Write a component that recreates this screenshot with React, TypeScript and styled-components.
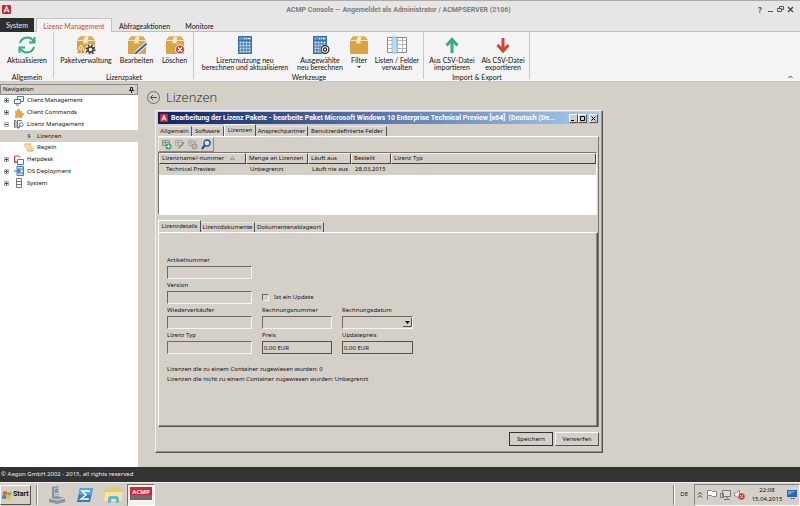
import React from "react";
import styled, { createGlobalStyle, css } from "styled-components";

const face = "#d4d0c8";
const ui = '"Noto Sans", "DejaVu Sans", sans-serif';
const ribbonFont = 'Lato, "Noto Sans", sans-serif';
const captionFont = 'Roboto, "Noto Sans", sans-serif';

const Global = createGlobalStyle`
  *, *::before, *::after { box-sizing: border-box; }
  body { margin: 0; background: ${face}; }
  button, input, select { font: inherit; color: inherit; margin: 0; padding: 0; border: 0; border-radius: 0; background: none; }
  button { white-space: nowrap; }
  ul { list-style: none; margin: 0; padding: 0; }
  h1, h2, p { margin: 0; font-weight: normal; }
  svg { display: block; flex: none; }
`;

const raised = css`
  border: 1px solid;
  border-color: #fff #55534f #55534f #fff;
`;

const Page = styled.div`
  min-height: 100vh;
  display: flex;
  flex-direction: column;
  font: 6px/9px ${ui};
  color: #111;
  background: ${face};
`;

/* Application title and ribbon */

const TitleBar = styled.header`
  display: grid;
  grid-template-columns: 1fr auto 1fr;
  align-items: center;
  height: 18px;
  padding: 0 5px 0 2px;
  border-top: 1px solid #aaa;
  background: #e6e6e6;
`;

const AppTitle = styled.h1`
  font: bold 7px/10px ${captionFont};
  color: #7c7c7c;
`;

const WindowControls = styled.div`
  display: flex;
  justify-content: flex-end;
  color: #555;
  button { width: 10px; height: 10px; display: grid; place-items: center; font-weight: bold; font-size: 8px; }
`;

const RibbonTabs = styled.div`
  display: flex;
  height: 14px;
  font: 7px/9px ${ribbonFont};
  background: #e6e6e6;
  border-bottom: 1px solid #bdbdbd;
`;

const RibbonTab = styled.button<{ $kind?: "system" | "active"; $width: number }>`
  width: ${(p) => p.$width}px;
  height: 14px;
  padding-top: 2px;
  text-align: center;
  ${(p) => p.$kind === "system" && css`background: #2d2d2d; color: #eee; margin-right: 2px; padding-top: 0;`}
  ${(p) => p.$kind === "active" && css`background: #f4f4f4; color: #d2452f; border: 1px solid #c4c4c4; border-bottom: 0;`}
`;

const Ribbon = styled.div`
  display: flex;
  height: 50px;
  font: 7px/7px ${ribbonFont};
  background: #f4f4f4;
  border-bottom: 1px solid #c9c7c3;
`;

const Group = styled.section<{ $width: number }>`
  width: ${(p) => p.$width}px;
  display: flex;
  flex-direction: column;
  justify-content: space-between;
  padding-top: 3px;
  background: linear-gradient(#c8c8c8, #c8c8c8) right top / 1px 47px no-repeat;
`;

const GroupItems = styled.div`
  display: flex;
  justify-content: center;
`;

const GroupTitle = styled.h2`
  font-size: 7px;
  line-height: 7px;
  text-align: center;
`;

const Tool = styled.button<{ $width: number }>`
  width: ${(p) => p.$width}px;
  display: flex;
  flex-direction: column;
  align-items: center;
  gap: 2px;
  line-height: 7px;
  white-space: pre;
`;

const Collapse = styled.button`
  margin: auto 6px 2px auto;
`;

/* Workspace */

const Workspace = styled.main`
  flex: 1;
  display: flex;
  padding-top: 2px;
`;

const Navigation = styled.nav`
  width: 138px;
  flex: none;
  display: flex;
  flex-direction: column;
  background: #fff;
`;

const NavHeader = styled.div`
  display: flex;
  align-items: center;
  justify-content: space-between;
  height: 11px;
  padding: 0 3px 0 2px;
  border: 1px solid #8b8983;
  background: ${face};
`;

const Tree = styled.ul`
  display: grid;
  grid-template-rows: repeat(8, 1fr);
  height: 94px;
`;

const TreeItem = styled.li<{ $child?: boolean; $selected?: boolean }>`
  display: flex;
  align-items: center;
  gap: 3px;
  padding-left: ${(p) => (p.$child ? 24 : 4)}px;
  background: ${(p) => (p.$selected ? face : "transparent")};
`;

const Expander = styled.button`
  width: 5px;
  height: 5px;
  margin-right: 2px;
`;

const TreeLabel = styled.a`
  color: inherit;
  text-decoration: none;
`;

const Content = styled.div`
  flex: 1;
  min-width: 0;
  padding: 3px 197px 13px 17px;
`;

const PageHead = styled.div`
  display: flex;
  align-items: center;
  gap: 6px;
  height: 20px;
  margin: 0 0 3px -8px;
  h2 { font: 300 13px/18px "Open Sans", "Noto Sans", sans-serif; color: #222; }
`;

const BackButton = styled.button`
  width: 13px;
  height: 13px;
`;

/* Licence dialog */

const Dialog = styled.section`
  border: 1px solid;
  border-color: #f4f2ee #55534f #55534f #f4f2ee;
  box-shadow: inset -1px -1px #95928b;
  padding: 1px 3px 6px 2px;
`;

const DialogTitle = styled.div`
  display: flex;
  align-items: center;
  gap: 3px;
  height: 12px;
  padding: 0 1px 0 2px;
  font-weight: bold;
  color: #fff;
  background: linear-gradient(90deg, #0c246a, #a6caf0);
`;

const DialogCaption = styled.h2`
  flex: 1;
  min-width: 0;
  overflow: hidden;
  text-overflow: ellipsis;
  white-space: pre;
  font: bold 7px/10px ${captionFont};
`;

const CaptionButtons = styled.div`
  display: flex;
  button { ${raised} width: 9px; height: 9px; background: ${face}; }
  button:last-child { margin-left: 2px; }
`;

const TabStrip = styled.div<{ $spaced?: boolean }>`
  display: flex;
  align-items: flex-end;
  height: 12px;
  margin-top: ${(p) => (p.$spaced ? 5 : 0)}px;
`;

const Tab = styled.button<{ $active?: boolean; $width: number }>`
  width: ${(p) => p.$width}px;
  height: 10px;
  text-align: center;
  border-top: 1px solid #e9e7e2;
  border-right: 1px solid #55534f;
  ${(p) => p.$active && css`height: 12px; padding-bottom: 1px; background: ${face}; border-left: 1px solid #fff; border-top-color: #fff;`}
`;

const Panel = styled.div`
  border: 1px solid;
  border-color: #fff #55534f #55534f #fff;
  box-shadow: inset -1px -1px #8b8983;
`;

const OuterPanel = styled.div`
  border-top: 1px solid #fff;
  border-right: 1px solid #77746e;
`;

const IconBar = styled.div`
  display: flex;
  align-items: center;
  gap: 3px;
  width: 56px;
  height: 15px;
  padding-left: 3px;
  border: 1px solid;
  border-color: #eceae6 #8b8983 #8b8983 #eceae6;
`;

const GridBox = styled.div`
  height: 63px;
  background: #fff;
  border: 1px solid;
  border-color: #77746e #fff #fff #77746e;
  margin-right: 1px;
`;

const Licences = styled.table`
  width: 100%;
  table-layout: fixed;
  border-collapse: separate;
  border-spacing: 0;
  th, td { height: 11px; padding: 0 0 0 4px; text-align: left; font-weight: normal; white-space: nowrap; background: ${face}; }
  th { border: 1px solid; border-color: #f0eee9 #44423e #44423e #f0eee9; padding-left: 2px; }
  td:first-child { padding-left: 7px; }
`;

const SortMark = styled.svg`
  display: inline-block;
  margin-left: 6px;
`;

const Details = styled(Panel)`
  padding: 23px 7px 42px 8px;
`;

const Form = styled.div`
  display: grid;
  grid-template-columns: 85px 70px 71px;
  column-gap: 10px;
  row-gap: 2px;
`;

const Field = styled.label<{ $newRow?: boolean }>`
  display: flex;
  flex-direction: column;
  gap: 1px;
  ${(p) => p.$newRow && css`grid-column-start: 1;`}
`;

const boxed = css`
  height: 13px;
  width: 100%;
  background: ${face};
  border: 1px solid;
  border-color: #6b6964 #f5f3ef #f5f3ef #6b6964;
`;

const TextBox = styled.input<{ $framed?: boolean }>`
  ${boxed}
  padding-left: 1px;
  ${(p) => p.$framed && css`border-color: #55534f;`}
`;

const DateBox = styled.div`
  display: grid;
  > * { grid-area: 1 / 1; }
  > svg { justify-self: end; margin: 2px 1px 0 0; pointer-events: none; }
`;

const DateSelect = styled.select`
  ${boxed}
  appearance: none;
`;

const CheckLabel = styled.label`
  display: flex;
  align-items: center;
  gap: 5px;
  height: 13px;
  align-self: end;
  white-space: nowrap;
`;

const CheckBox = styled.input`
  appearance: none;
  width: 7px;
  height: 7px;
  border: 1px solid;
  border-color: #6b6964 #f5f3ef #f5f3ef #6b6964;
`;

const Notes = styled.div`
  margin-top: 10px;
  line-height: 10px;
  white-space: nowrap;
`;

const Actions = styled.div`
  display: flex;
  justify-content: flex-end;
  gap: 2px;
  margin-top: 5px;
`;

const ActionButton = styled.button<{ $primary?: boolean }>`
  ${raised}
  width: 44px;
  height: 14px;
  ${(p) => p.$primary && css`outline: 1px solid #333; outline-offset: -1px;`}
`;

/* Status line and taskbar */

const StatusLine = styled.footer`
  height: 15px;
  padding: 3px 1px;
  color: #eee;
  background: #333;
`;

const Taskbar = styled.div`
  display: flex;
  align-items: center;
  height: 24px;
  border-top: 1px solid #f2f0ec;
`;

const StartButton = styled.button`
  ${raised}
  display: flex;
  align-items: center;
  gap: 1px;
  width: 31px;
  height: 20px;
  font: bold 7px/9px ${captionFont};
  padding-left: 1px;
  margin-right: 5px;
`;

const Divider = styled.span`
  width: 1px;
  height: 20px;
  background: #8b8983;
  box-shadow: 1px 0 #fff;
`;

const TaskButton = styled.button<{ $active?: boolean }>`
  width: 28px;
  height: 22px;
  display: grid;
  place-items: center;
  ${(p) => p.$active && css`background: #f3f1ee; border: 1px solid; border-color: #77746e #fff #fff #77746e;`}
`;

const Launchers = styled.div`
  display: flex;
  margin: 0 auto 0 6px;
`;

const Language = styled.span`
  margin: 0 6px;
`;

const Tray = styled.div`
  display: flex;
  align-items: center;
  gap: 3px;
  height: 22px;
  padding: 0 2px;
  border: 1px solid;
  border-color: #8b8983 #fff #fff #8b8983;
`;

const Clock = styled.time`
  width: 34px;
  margin-left: 2px;
  text-align: center;
  line-height: 9px;
`;

const AppLogo = ({ size = 9 }: { size?: number }) => (
  <svg width={size} height={size} viewBox="0 0 9 9">
    <rect width="9" height="9" rx="1" fill="#dc1f2c" />
    <path d="M2 7.3 4.5 1.7 7 7.3M3.2 5.6h2.6" fill="none" stroke="#fff" strokeWidth="1.2" />
  </svg>
);

const Refresh = () => (
  <svg width="20" height="20" viewBox="0 0 20 20" fill="none" stroke="#35ac7c" strokeWidth="2">
    <path d="M3 8A7.300 7.300 0 0 1 16.500 6.500M17 12A7.300 7.300 0 0 1 3.500 13.500" />
    <path d="M17.500 2v5.500H12M2.500 18v-5.500H8" />
  </svg>
);

const BoxIcon = ({ mark }: { mark?: "gear" | "pen" | "delete" }) => (
  <svg width="20" height="20" viewBox="0 0 20 20">
    <path d="M1 5.500 4 1.500h12l3 4V19H1z" fill="#d9a441" />
    <path d="M4 1.500h12l3 4H1z" fill="#e0ae50" />
    <path d="m9 1.500-1.500 4v3.500l2-1 2 1V5.500l1-4z" fill="#f8ecd0" />
    <path d="M1 5.500h6.500M11.500 5.500H19" stroke="#fbf3df" strokeWidth=".8" />
    {mark === "gear" && (
      <g>
        <path d="m5 10 4.500 8.500h-9z" fill="#e88a25" stroke="#f4f4f4" />
        <path d="M5 13v3M5 16.700v1" stroke="#fff" />
        <circle cx="14.500" cy="14.500" r="5.400" fill="#f4f4f4" />
        <circle cx="14.500" cy="14.500" r="4.300" fill="none" stroke="#444" strokeWidth="1.500" strokeDasharray="1.700 1.680" />
        <circle cx="14.500" cy="14.500" r="2.700" fill="none" stroke="#444" strokeWidth="1.800" />
      </g>
    )}
    {mark === "pen" && (
      <g><path d="M8.500 18.500 20 8" stroke="#f4f4f4" strokeWidth="4" /><path d="m9.500 17.500 10-9" stroke="#2c6cb5" strokeWidth="2.200" /><path d="m8 19 .7-2.500 1.800 1.800z" fill="#333" /></g>
    )}
    {mark === "delete" && (
      <g><circle cx="15" cy="14.500" r="4.600" fill="#cf4437" stroke="#f4f4f4" /><path d="m13 12.500 4 4m0-4-4 4" stroke="#fff" strokeWidth="1.300" /></g>
    )}
  </svg>
);

const Calculator = ({ gear }: { gear?: boolean }) => (
  <svg width="20" height="20" viewBox="0 0 20 20">
    <path d="M3 1h14v18H3z" fill="#396fa9" />
    <path d="M4 2h12v3H4z" fill="#5b95cd" />
    <path d="M9 3.500h1m1 0h1m1 0h2" stroke="#fff" />
    <path d="M4.500 7.500h11M4.500 10.500h11M4.500 13.500h11M4.500 16.500h11" stroke="#d7e8f7" strokeWidth="2" strokeDasharray="2 1" />
    {gear && (
      <g><circle cx="15" cy="14.500" r="4.800" fill="#fff" /><circle cx="15" cy="14.500" r="3.900" fill="none" stroke="#222" strokeWidth="1.200" /><circle cx="15" cy="14.500" r="1.700" fill="none" stroke="#222" strokeWidth="1.200" /></g>
    )}
  </svg>
);

const ColumnsIcon = () => (
  <svg width="20" height="20" viewBox="0 0 20 20">
    <path d="M.5 2.500h19v15H.5z" fill="#fff" stroke="#888" />
    <path d="M1 5.500h18M1 9.500h18M1 13.500h18M10.500 3v14M15.500 3v14" stroke="#aaa" strokeWidth=".8" />
    <path d="M5 2h5v16H5z" fill="#b9dff0" stroke="#72aeca" strokeWidth=".7" />
  </svg>
);

const Arrow = ({ down }: { down?: boolean }) => (
  <svg width="20" height="20" viewBox="0 0 20 20" fill="none" stroke={down ? "#cf4437" : "#38ac80"} strokeWidth="3">
    <path d={down ? "M10 3v14M4.500 10l5.500 6 5.500-6" : "M10 18V4M4.500 10.500 10 4.500l5.500 6"} />
  </svg>
);

type NavKind = "client" | "command" | "license" | "rules" | "help" | "deploy" | "system";
const NavIcon = ({ kind }: { kind: NavKind }) => (
  <svg width="10" height="10" viewBox="0 0 10 10" fill="none" stroke="#3d7fbd">
    {kind === "client" && <g><path d="M3.500.5h6v5h-6z" /><path d="M.5 3.500h6v4h-6z" fill="#fff" /><path d="M2 9h3" /></g>}
    {kind === "command" && <path d="M1 3h2.200a1.500 1.500 0 1 1 2.600 0H8v2.200a1.400 1.400 0 1 1 0 2.400V10H5.500a1.400 1.400 0 0 0-2.300 0H1V7.500a1.300 1.300 0 0 0 0-2.300z" fill="#eea53c" stroke="none" />}
    {kind === "license" && <g><path d="M.5 9V1.500h1.500V9M3.500 9V1.500H8" stroke="#777" /><circle cx="7.200" cy="5.500" r="1.900" fill="#fff" /><path d="M5.800 7 4 9.500" strokeWidth="1.300" /></g>}
    {kind === "rules" && <path d="M1 1h6c-3 2.500 3 2.500 2 7H3c2-2.500-3-3-2-7zM2.500 3h3M4 5h3M5 7h3" stroke="#eb9d3a" />}
    {kind === "help" && <g><path d="M.5 1v6h3" stroke="#cc4437" strokeWidth="1.500" /><path d="M1 1h4l1 1.500" stroke="#cc4437" /><path d="M3.500 4.500h6v5h-6z" fill="#fff" /></g>}
    {kind === "deploy" && <g><path d="M3 .5h6.500v9H3z" fill="#cfe4f5" /><path d="M4 3h5M4 7h5M0 5h6M4 3.500 6 5 4 6.500" strokeWidth="1.200" /></g>}
    {kind === "system" && <path d="M2.500.5h5v9h-5zM2.500 3.500h5M2.500 6.500h5" stroke="#777" />}
  </svg>
);

const ExpandMark = ({ open }: { open?: boolean }) => (
  <svg width="5" height="5" viewBox="0 0 5 5" fill="none" stroke="#666">
    <path d="M.5.5h4v4h-4z" stroke="#aaa" /><path d={open ? "M1 2.500h3" : "M1 2.500h3M2.500 1v3"} stroke="#444" />
  </svg>
);

type BarKind = "add" | "edit" | "remove" | "search";
const BarIcon = ({ kind }: { kind: BarKind }) => (
  <svg width="10" height="11" viewBox="0 0 10 11" fill="none">
    {kind !== "search" && <path d="M.5 1.500h7v5h-7zM.5 3.500h7M3 1.500v5" stroke={kind === "add" ? "#6c8c7c" : "#a3a19c"} strokeWidth=".8" />}
    {kind === "add" && <g><circle cx="6.500" cy="7.500" r="3" fill="#2fa467" /><path d="M6.500 5.700v3.600M4.700 7.500h3.600" stroke="#fff" /></g>}
    {kind === "edit" && <path d="m3.500 9.500 5.500-6" stroke="#8a8883" strokeWidth="1.500" />}
    {kind === "remove" && <g><circle cx="6.500" cy="7.500" r="2.500" fill="#d4d0c8" stroke="#85837f" /><path d="m5.500 6.500 2 2m0-2-2 2" stroke="#85837f" strokeWidth=".7" /></g>}
    {kind === "search" && <g stroke="#164f96"><circle cx="6" cy="4" r="3" fill="#dbe9f5" strokeWidth="1.300" /><path d="M3.800 6.500.8 10" strokeWidth="2" /></g>}
  </svg>
);

const navItems: { label: string; kind?: NavKind; child?: boolean; selected?: boolean; open?: boolean }[] = [
  { label: "Client Management", kind: "client" },
  { label: "Client Commands", kind: "command" },
  { label: "Lizenz Management", kind: "license", open: true },
  { label: "Lizenzen", child: true, selected: true },
  { label: "Regeln", kind: "rules", child: true },
  { label: "Helpdesk", kind: "help" },
  { label: "OS Deployment", kind: "deploy" },
  { label: "System", kind: "system" },
];

const SectionSign = styled.span`
  width: 10px;
  text-align: center;
`;

export default function App() {
  return (
    <Page>
      <Global />
      <TitleBar>
        <AppLogo />
        <AppTitle>ACMP Console -- Angemeldet als Administrator / ACMPSERVER (2106)</AppTitle>
        <WindowControls>
          <button aria-label="Hilfe">?</button>
          <button aria-label="Minimieren"><svg width="7" height="7"><path d="M1 5.500h5" stroke="#555" /></svg></button>
          <button aria-label="Wiederherstellen"><svg width="7" height="7" fill="none" stroke="#555"><path d="M2.500 2V.5h4v3H5M.5 2.500h4v3h-4z" /></svg></button>
          <button aria-label="Schließen"><svg width="7" height="7"><path d="m1 1 5 5m0-5-5 5" stroke="#444" strokeWidth="1.300" /></svg></button>
        </WindowControls>
      </TitleBar>
      <RibbonTabs role="tablist">
        <RibbonTab role="tab" $kind="system" $width={34}>System</RibbonTab>
        <RibbonTab role="tab" aria-selected $kind="active" $width={76}>Lizenz Management</RibbonTab>
        <RibbonTab role="tab" $width={65}>Abfrageaktionen</RibbonTab>
        <RibbonTab role="tab" $width={45}>Monitore</RibbonTab>
      </RibbonTabs>
      <Ribbon>
        <Group $width={54}>
          <GroupItems><Tool $width={52}><Refresh />Aktualisieren</Tool></GroupItems>
          <GroupTitle>Allgemein</GroupTitle>
        </Group>
        <Group $width={140}>
          <GroupItems>
            <Tool $width={62}><BoxIcon mark="gear" />Paketverwaltung</Tool>
            <Tool $width={39}><BoxIcon mark="pen" />Bearbeiten</Tool>
            <Tool $width={37}><BoxIcon mark="delete" />Löschen</Tool>
          </GroupItems>
          <GroupTitle>Lizenzpaket</GroupTitle>
        </Group>
        <Group $width={230}>
          <GroupItems>
            <Tool $width={98}><Calculator />{"Lizenznutzung neu\nberechnen und aktualisieren"}</Tool>
            <Tool $width={52}><Calculator gear />{"Ausgewählte\nneu berechnen"}</Tool>
            <Tool $width={26}><BoxIcon />{"Filter"}<svg width="4" height="2"><path d="M0 0h4L2 2z" fill="#333" /></svg></Tool>
            <Tool $width={50}><ColumnsIcon />{"Listen / Felder\nverwalten"}</Tool>
          </GroupItems>
          <GroupTitle>Werkzeuge</GroupTitle>
        </Group>
        <Group $width={106}>
          <GroupItems>
            <Tool $width={52}><Arrow />{"Aus CSV-Datei\nimportieren"}</Tool>
            <Tool $width={50}><Arrow down />{"Als CSV-Datei\nexportieren"}</Tool>
          </GroupItems>
          <GroupTitle>Import &amp; Export</GroupTitle>
        </Group>
        <Collapse aria-label="Menüband minimieren"><svg width="7" height="5" fill="none" stroke="#444"><path d="m1.500 4 2-2 2 2" /></svg></Collapse>
      </Ribbon>

      <Workspace>
        <Navigation>
          <NavHeader>Navigation<svg width="5" height="6" fill="none" stroke="#222"><path d="M1.500.5h2v3h-2zM0 3.500h5M2.500 4v2" /></svg></NavHeader>
          <Tree>
            {navItems.map((n) => (
              <TreeItem key={n.label} $child={n.child} $selected={n.selected}>
                {!n.child && <Expander aria-label={n.label}><ExpandMark open={n.open} /></Expander>}
                {n.kind ? <NavIcon kind={n.kind} /> : <SectionSign>§</SectionSign>}
                <TreeLabel href="#">{n.label}</TreeLabel>
              </TreeItem>
            ))}
          </Tree>
        </Navigation>
        <Content>
          <PageHead>
            <BackButton aria-label="Zurück"><svg width="13" height="13" fill="none" stroke="#555"><circle cx="6.500" cy="6.500" r="6" strokeWidth=".8" /><path d="M10 6.500H3.500M6 4 3.500 6.500 6 9" /></svg></BackButton>
            <h2>Lizenzen</h2>
          </PageHead>
          <Dialog role="dialog" aria-label="Bearbeitung der Lizenz Pakete">
            <DialogTitle>
              <AppLogo size={8} />
              <DialogCaption>Bearbeitung der Lizenz Pakete - bearbeite Paket Microsoft Windows 10 Enterprise Technical Preview [x64]  (Deutsch (De...</DialogCaption>
              <CaptionButtons>
                <button aria-label="Minimieren"><svg width="7" height="7"><path d="M1 5.500h3" stroke="#000" /></svg></button>
                <button aria-label="Maximieren"><svg width="7" height="7" fill="none" stroke="#000"><path d="M1.500 1.500h4v4h-4z" /></svg></button>
                <button aria-label="Schließen"><svg width="7" height="7" stroke="#000"><path d="m1.500 1.500 4 4m0-4-4 4" /></svg></button>
              </CaptionButtons>
            </DialogTitle>
            <TabStrip role="tablist">
              <Tab role="tab" $width={34}>Allgemein</Tab>
              <Tab role="tab" $width={32}>Software</Tab>
              <Tab role="tab" aria-selected $active $width={32}>Lizenzen</Tab>
              <Tab role="tab" $width={52}>Ansprechpartner</Tab>
              <Tab role="tab" $width={79}>Benutzerdefinierte Felder</Tab>
            </TabStrip>
            <OuterPanel>
              <IconBar>
                <button aria-label="Hinzufügen"><BarIcon kind="add" /></button>
                <button aria-label="Bearbeiten"><BarIcon kind="edit" /></button>
                <button aria-label="Entfernen"><BarIcon kind="remove" /></button>
                <button aria-label="Suchen"><BarIcon kind="search" /></button>
              </IconBar>
              <GridBox>
                <Licences>
                  <colgroup><col width="87" /><col width="62" /><col width="43" /><col width="40" /><col /></colgroup>
                  <thead><tr>
                    <th>Lizenzname/-nummer<SortMark width="5" height="4" fill="none" stroke="#999"><path d="m.5 3.500 2-3 2 3z" /></SortMark></th>
                    <th>Menge an Lizenzen</th><th>Läuft aus</th><th>Bestellt</th><th>Lizenz Typ</th>
                  </tr></thead>
                  <tbody><tr><td>Technical Preview</td><td>Unbegrenzt</td><td>Läuft nie aus</td><td>28.03.2015</td><td /></tr></tbody>
                </Licences>
              </GridBox>
              <TabStrip role="tablist" $spaced>
                <Tab role="tab" aria-selected $active $width={43}>Lizenzdetails</Tab>
                <Tab role="tab" $width={54}>Lizenzdokumente</Tab>
                <Tab role="tab" $width={69}>Dokumentenablageort</Tab>
              </TabStrip>
              <Details>
                <Form>
                  <Field>Artikelnummer<TextBox /></Field>
                  <Field $newRow>Version<TextBox /></Field>
                  <CheckLabel><CheckBox type="checkbox" />Ist ein Update</CheckLabel>
                  <Field $newRow>Wiederverkäufer<TextBox /></Field>
                  <Field>Rechnungsnummer<TextBox /></Field>
                  <Field>Rechnungsdatum
                    <DateBox>
                      <DateSelect><option /></DateSelect>
                      <svg width="9" height="9"><path d="M0 0h9v9H0z" fill="#d4d0c8" /><path d="M0 8.500h8.500V0" stroke="#55534f" fill="none" /><path d="M2 3h5L4.500 6z" /></svg>
                    </DateBox>
                  </Field>
                  <Field $newRow>Lizenz Typ<TextBox /></Field>
                  <Field>Preis<TextBox $framed defaultValue="0,00 EUR" /></Field>
                  <Field>Updatepreis<TextBox $framed defaultValue="0,00 EUR" /></Field>
                </Form>
                <Notes>
                  <p>Lizenzen die zu einem Container zugewiesen wurden: 0</p>
                  <p>Lizenzen die nicht zu einem Container zugewiesen wurden: Unbegrenzt</p>
                </Notes>
              </Details>
            </OuterPanel>
            <Actions>
              <ActionButton $primary>Speichern</ActionButton>
              <ActionButton>Verwerfen</ActionButton>
            </Actions>
          </Dialog>
        </Content>
      </Workspace>

      <StatusLine>© Aagon GmbH 2002 - 2015, all rights reserved</StatusLine>
      <Taskbar>
        <StartButton>
          <svg width="10" height="10" viewBox="0 0 10 10"><path d="M1 2q2-1.500 4-.4L4.500 5Q3 4 .5 5z" fill="#e4572b" /><path d="M5.500 2q2 1 4-.3L9 5q-2 1-4 0z" fill="#7ab43c" /><path d="M.4 5.500q2-1 4 0L4 9Q2 8 0 9z" fill="#3f7fcb" /><path d="M5 5.700q2 1 4 0L8.500 9q-2 1-4 0z" fill="#f3b928" /></svg>
          Start
        </StartButton>
        <Divider />
        <Launchers>
          <TaskButton aria-label="Server-Manager"><svg width="18" height="18" viewBox="0 0 18 18"><path d="m4 1 5-1 2 1v11l-5 1-2-2z" fill="#87939c" /><path d="m6 2 5-1v11l-5 1z" fill="#b3bdc4" /><path d="m7 4 3-.5M7 6l3-.5" stroke="#5d6971" /><path d="m1 12 8-2 8 2v4l-8 2-8-2z" fill="#8996a0" /><path d="m1 12 8 2 8-2" stroke="#dbe2e6" fill="none" /></svg></TaskButton>
          <TaskButton aria-label="PowerShell"><svg width="18" height="16" viewBox="0 0 18 16"><path d="M4 1h13l-3 14H1z" fill="#2f7dbb" /><path d="M4 1h13l-1.500 7h-13z" fill="#5ba4d9" /><path d="M13 5V4H6l4 4-5 4h7v-1" fill="none" stroke="#fff" strokeWidth="1.500" /></svg></TaskButton>
          <TaskButton aria-label="Explorer"><svg width="20" height="18" viewBox="0 0 20 18"><path d="M1 3h6l1-2h8v2h3v12H1z" fill="#e7cb6b" /><path d="M2 6h17v9H1z" fill="#f5e6a2" /><path d="M5 17v-4q0-3 3-3h5q3 0 3 3v4h-3v-4H8v4z" fill="#69b4df" /></svg></TaskButton>
          <TaskButton $active aria-label="ACMP"><svg width="22" height="15" viewBox="0 0 22 15"><path d="M0 0h22v8H0z" fill="#d6232f" /><path d="M0 8h22v5H0z" fill="#6b6b6b" /><text x="11" y="6.500" textAnchor="middle" fontSize="6" fontWeight="bold" fill="#fff">ACMP</text></svg></TaskButton>
        </Launchers>
        <Divider />
        <Language>DE</Language>
        <Tray>
          <svg width="6" height="8" fill="none" stroke="#333"><path d="m1 3.500 2-2 2 2M1 6.500l2-2 2 2" /></svg>
          <svg width="11" height="11" fill="#fff" stroke="#888"><path d="M1.500 11V1.500h4l1 1h4v5h-4l-1-1h-4" /></svg>
          <svg width="11" height="11" fill="#ddd" stroke="#777"><path d="M2.500 1.500h8v6h-8zM.5 4.500h3v4h-3zM4 10.500h6M7 8v2" /></svg>
          <svg width="11" height="11" fill="none"><path d="M.5 4h2l3-3v9l-3-3h-2z" fill="#fff" stroke="#888" /><circle cx="7.500" cy="7.500" r="3.200" fill="#d43d35" /><path d="m6 6 3 3m0-3L6 9" stroke="#fff" /></svg>
          <Clock>22:08<br />15.04.2015</Clock>
          <svg width="10" height="9"><path d="M0 0h10v7H0z" fill="#2b66b4" /><path d="M1 1h8L1 5z" fill="#70a4df" /><path d="M3 8.500h5" stroke="#777" /></svg>
        </Tray>
      </Taskbar>
    </Page>
  );
}
